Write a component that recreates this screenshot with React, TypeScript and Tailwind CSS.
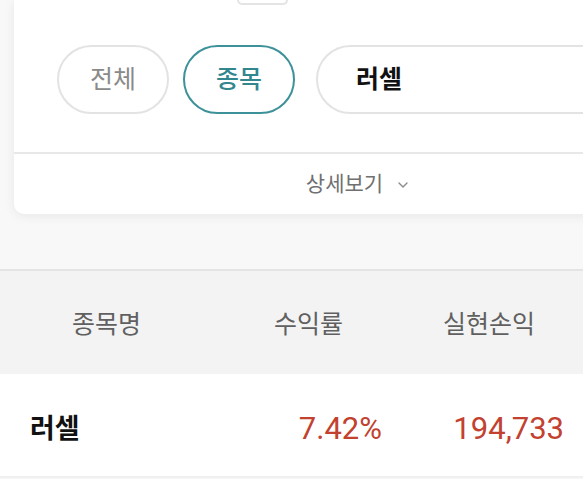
import { ChevronDown } from 'lucide-react';

const font = "font-['Roboto','Noto_Sans_CJK_KR',sans-serif]";

function FilterCard() {
  return (
    <div className="ml-[14px] w-[689px] bg-white rounded-b-[10px] shadow-[0_2px_12px_rgba(0,0,0,0.07)]">
      {/* bottom edge of the box above */}
      <div className="pl-[223px]">
        <div className="w-[51px] h-[5px] border-x-2 border-b-2 border-[#e4e4e4] rounded-b-[6px]" />
      </div>

      <div className="flex items-center pl-[43px] pt-[40px]">
        <button className="w-[112px] h-[69px] rounded-full border-2 border-[#e3e3e3] text-[25px] text-[#8a8a8a]">
          전체
        </button>
        <button className="ml-[14px] w-[112px] h-[69px] rounded-full border-2 border-[#3d9199] text-[25px] font-medium text-[#32868e]">
          종목
        </button>
        <div className="ml-[21px] flex-1 h-[69px] rounded-full border-2 border-[#e3e3e3] flex items-center pl-[38px]">
          <span className="text-[25px] font-bold text-[#111]">러셀</span>
        </div>
      </div>

      <div className="mt-[38px] border-t-2 border-[#e8e8e8]" />
      <div className="h-[60px] flex items-center justify-center gap-[12px] pt-[2px]">
        <span className="text-[21px] text-[#707070]">상세보기</span>
        <ChevronDown className="w-[16px] h-[16px] text-[#8a8a8a]" strokeWidth={2} />
      </div>
    </div>
  );
}

function ResultTable() {
  return (
    <div className="mt-[55px] border-t-2 border-[#e4e4e4]">
      <div className="flex h-[103px] items-center pt-[5px] bg-[#f3f3f3] text-[25px] text-[#606060]">
        <div className="w-[213px] text-center">종목명</div>
        <div className="w-[191px] text-center">수익률</div>
        <div className="w-[170px] text-center">실현손익</div>
      </div>
      <div className="flex h-[104px] items-center pt-[9px] bg-white border-b-2 border-[#f0f0f0]">
        <div className="w-[213px] pl-[30px] text-[27px] font-bold text-[#111]">러셀</div>
        <div className="w-[191px] pr-[22px] text-right text-[31px] text-[#c2412f]">7.42%</div>
        <div className="w-[170px] pr-[10px] text-right text-[31px] text-[#c2412f]">194,733</div>
      </div>
    </div>
  );
}

export default function App() {
  return (
    <div className={`w-[583px] h-[479px] overflow-hidden bg-[#f8f8f8] ${font}`}>
      <FilterCard />
      <ResultTable />
    </div>
  );
}
